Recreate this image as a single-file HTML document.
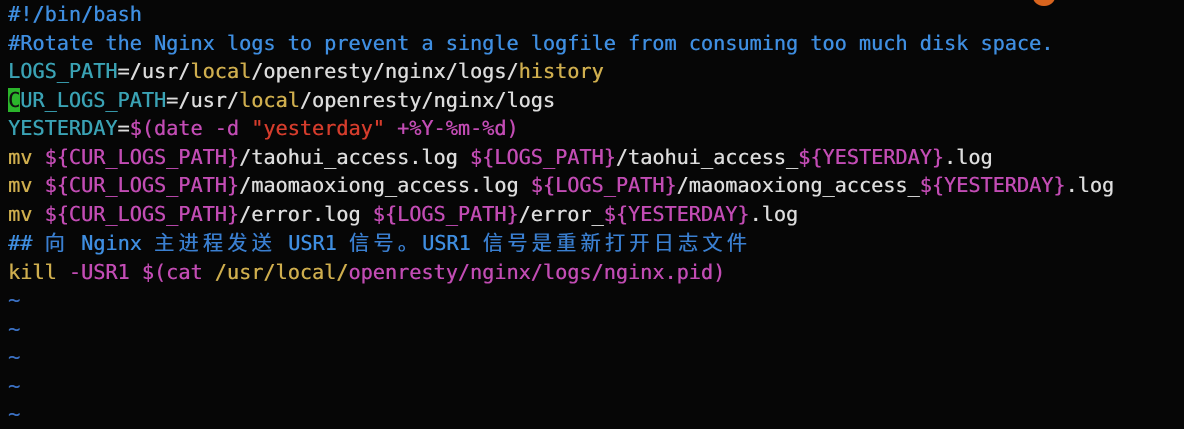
<!DOCTYPE html>
<html><head><meta charset="utf-8"><style>
html,body{margin:0;padding:0;background:#060606;width:1184px;height:426px;overflow:hidden}
pre{margin:0;position:absolute;left:8px;top:0;font-family:"DejaVu Sans Mono","Liberation Mono","Noto Sans CJK SC",monospace;font-size:20.2px;line-height:28.5px;color:#dcdcdc;text-shadow:0.4px 0 0 currentColor}
.c{color:#3f8ee0}.v{color:#3aa2b4}.y{color:#cfae4e}.m{color:#c24cb4}.r{color:#d43c2c}
.z{font-family:"Noto Sans CJK SC",sans-serif;letter-spacing:4.2px;color:#3a7fd0}
.cur{background:#2bb52b;color:#111}
.t{color:#3a6fc0}
</style></head><body>
<div style="position:absolute;left:1033px;top:-12px;width:22px;height:18px;border-radius:50%;background:#d8641e"></div>
<pre><span class="c">#!/bin/bash</span>
<span class="c">#Rotate the Nginx logs to prevent a single logfile from consuming too much disk space.</span>
<span class="v">LOGS_PATH</span>=/usr/<span class="y">local</span>/openresty/nginx/logs/<span class="y">history</span>
<span class="v"><span class="cur">C</span>UR_LOGS_PATH</span>=/usr/<span class="y">local</span>/openresty/nginx/logs
<span class="v">YESTERDAY</span>=<span class="m">$(date -d </span><span class="r">"yesterday"</span><span class="m"> +%Y-%m-%d)</span>
<span class="y">mv</span> <span class="m">${CUR_LOGS_PATH}</span>/taohui_access.log <span class="m">${LOGS_PATH}</span>/taohui_access_<span class="m">${YESTERDAY}</span>.log
<span class="y">mv</span> <span class="m">${CUR_LOGS_PATH}</span>/maomaoxiong_access.log <span class="m">${LOGS_PATH}</span>/maomaoxiong_access_<span class="m">${YESTERDAY}</span>.log
<span class="y">mv</span> <span class="m">${CUR_LOGS_PATH}</span>/error.log <span class="m">${LOGS_PATH}</span>/error_<span class="m">${YESTERDAY}</span>.log
<span class="c">## <span class="z">向</span> Nginx <span class="z">主进程发送</span> USR1 <span class="z">信号。</span>USR1 <span class="z">信号是重新打开日志文件</span></span>
<span class="y">kill</span> <span class="m">-USR1 $(cat </span><span class="y">/usr/local/</span><span class="m">openresty/nginx/logs/nginx.pid)</span>
<span class="t">~</span>
<span class="t">~</span>
<span class="t">~</span>
<span class="t">~</span>
<span class="t">~</span></pre>
</body></html>
